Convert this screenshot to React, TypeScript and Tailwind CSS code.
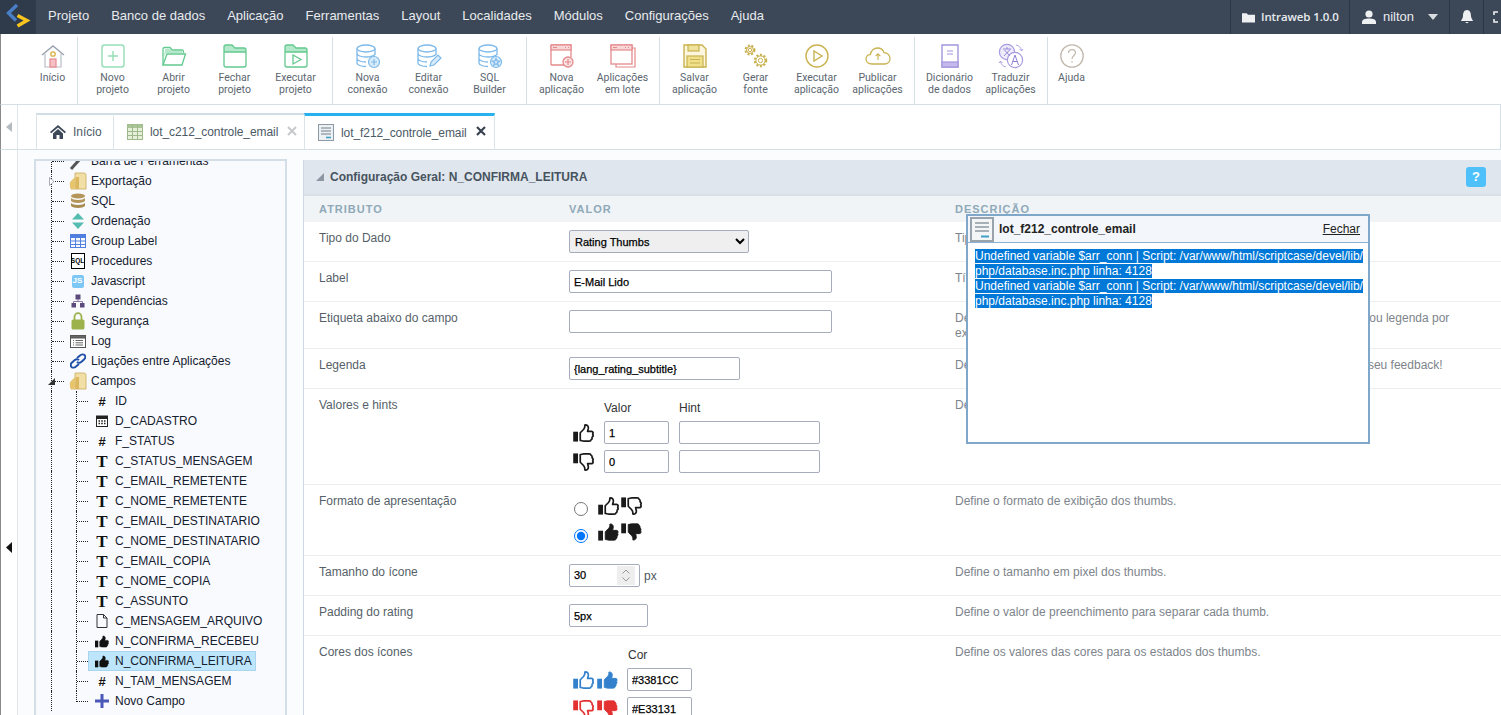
import React from "react";

const HAND = "M8.2 10.2 L12 6.4 C13.2 5 13.8 3.4 13.6 1.2 C16 0.6 18 2.6 17.6 5.2 L16.8 8.6 L21.4 8.6 C23.2 8.6 23.6 10.6 22.7 11.9 C23.5 13.3 23 14.8 22 15.4 C22.3 16.9 21.6 18.2 20.6 18.7 C20.6 19.8 19.6 20 18.6 20 L12.4 20 C10.6 20 9.8 19.2 8.2 19.2 Z";

function Thumb({ down, solid, color = "#1a1a1a" }: { down?: boolean; solid?: boolean; color?: string }) {
  return (
    <svg viewBox="0 0 24 21" width="21" height="18" className={down ? "-scale-y-100 shrink-0" : "shrink-0"}>
      <rect x="0" y="9" width="5.6" height="11.5" fill={color} />
      <path d={HAND} fill={solid ? color : "none"} stroke={color} strokeWidth={solid ? 1 : 2} strokeLinejoin="round" />
    </svg>
  );
}

const S = ({ children }: { children: React.ReactNode }) => (
  <svg viewBox="0 0 26 26" width="26" height="26" fill="none" strokeWidth="1.2">{children}</svg>
);

const G = "#62c98f";
const GL = "#b4e8cb";
const B = "#7db9ea";
const R = "#e48a8c";
const Y = "#c9b24f";

const IHome = () => (
  <S>
    <path d="M2 12 L13 3 L24 12" stroke="#9aa3ad" strokeWidth="1.4" />
    <path d="M5 10.5 V24 H21 V10.5" stroke="#b8bec6" />
    <circle cx="13" cy="11" r="2.2" stroke="#d6b13c" strokeWidth="1.3" />
    <rect x="10" y="16" width="6" height="8" fill="#f6c2c6" stroke="#e58a92" />
  </S>
);
const INew = () => (
  <S>
    <rect x="2" y="2" width="22" height="22" rx="2.5" stroke="#96dfb6" strokeWidth="1.4" />
    <path d="M13 8 V18 M8 13 H18" stroke="#96dfb6" strokeWidth="1.4" />
  </S>
);
const IOpen = () => (
  <S>
    <path d="M2 22 V6 C2 5 3 4.5 3.5 4.5 H9 L11 7 H21 C22 7 22.5 8 22.5 9 V10" stroke={G} strokeWidth="1.3" />
    <path d="M2 22 L6 11 H24.5 L21 22 Z" stroke={G} strokeWidth="1.3" />
    <path d="M4 6 H9 L10.5 8 H21 V10 H5 L3 14 Z" fill={GL} />
  </S>
);
const IClosed = ({ play }: { play?: boolean }) => (
  <S>
    <path d="M2 8 V4 C2 2.8 2.8 2 4 2 H10 L13 5 H22 C23.2 5 24 5.8 24 7 V9 H2 Z" fill={GL} />
    <path d="M2 9 V4 C2 2.8 2.8 2 4 2 H10 L13 5 H22 C23.2 5 24 5.8 24 7 V22 C24 23.2 23.2 24 22 24 H4 C2.8 24 2 23.2 2 22 Z M2 9 H24" stroke={G} strokeWidth="1.3" />
    {play && <path d="M10 12 L18 16.5 L10 21 Z" stroke={G} strokeWidth="1.3" />}
  </S>
);
const IDb = ({ badge }: { badge: "plus" | "pen" | "star" }) => (
  <S>
    <ellipse cx="11" cy="5.5" rx="9" ry="3.5" stroke={B} strokeWidth="1.3" />
    <path d="M2 5.5 V20 C2 22 6 23.5 11 23.5 M20 5.5 V12 M2 10.5 C2 12.5 6 14 11 14 C15 14 18 13.2 20 11.5 M2 15.5 C2 17.5 6 19 11 19" stroke={B} strokeWidth="1.3" />
    {badge === "plus" && (
      <>
        <circle cx="19" cy="19" r="5.5" fill="#d9ecfb" stroke={B} />
        <path d="M19 16 V22 M16 19 H22" stroke={B} />
      </>
    )}
    {badge === "pen" && <path d="M14 23 L15 19 L22 12 L25 15 L18 22 Z" fill="#d9ecfb" stroke={B} />}
    {badge === "star" && (
      <>
        <circle cx="19" cy="19" r="5.5" fill="#d9ecfb" stroke={B} />
        <path d="M19 15.5 L20 18 L22.5 18 L20.5 19.7 L21.2 22.2 L19 20.8 L16.8 22.2 L17.5 19.7 L15.5 18 L18 18 Z" stroke={B} />
      </>
    )}
  </S>
);
const IApp = () => (
  <S>
    <path d="M2 2 H22 V14 M15 22 H2 Z M2 2 V22" stroke={R} strokeWidth="1.3" />
    <rect x="2" y="2" width="20" height="5" fill="#f7d6d7" stroke={R} />
    <path d="M4 4.5 H8 M16 4.5 H17 M19 4.5 H20" stroke={R} />
    <circle cx="19" cy="19" r="5" fill="#fbe3e3" stroke={R} strokeWidth="1.3" />
    <path d="M19 16 V22 M16 19 H22" stroke={R} strokeWidth="1.2" />
  </S>
);
const IApps = () => (
  <S>
    <path d="M22 5 H25 V24 H6 V21" stroke={R} />
    <rect x="1" y="2" width="21" height="19" fill="#fff" stroke={R} strokeWidth="1.3" />
    <rect x="1" y="2" width="21" height="5" fill="#f7d6d7" stroke={R} />
    <path d="M3 4.5 H7 M15 4.5 H16 M18 4.5 H19" stroke={R} />
  </S>
);
const ISave = () => (
  <S>
    <path d="M2 2 H20 L24 6 V24 H2 Z" stroke={Y} strokeWidth="1.4" fill="#fbf6dd" />
    <rect x="6" y="2" width="11" height="6" fill="#efe29c" stroke={Y} />
    <rect x="5" y="13" width="16" height="11" fill="#f0e08c" stroke={Y} />
    <path d="M8 16.5 H18 M8 20 H18" stroke={Y} />
  </S>
);
const Gear = ({ cx, cy, r }: { cx: number; cy: number; r: number }) => (
  <>
    <circle cx={cx} cy={cy} r={r} stroke={Y} strokeWidth="2.2" strokeDasharray="2 1.6" />
    <circle cx={cx} cy={cy} r={r - 1} stroke={Y} strokeWidth="1" />
    <circle cx={cx} cy={cy} r={r / 2.6} stroke={Y} strokeWidth="1" />
  </>
);
const IGears = () => (
  <S>
    <Gear cx={7} cy={7} r={4.4} />
    <Gear cx={17.5} cy={17.5} r={5.6} />
  </S>
);
const IRun = () => (
  <S>
    <circle cx="13" cy="13" r="11" stroke={Y} strokeWidth="1.4" />
    <path d="M10 8 L18 13 L10 18 Z" stroke={Y} strokeWidth="1.4" />
  </S>
);
const ICloud = () => (
  <S>
    <path d="M7 21 C3 21 1 18.6 1 16 C1 13.4 3 11.6 5.4 11.6 C6 7.6 9 5 12.6 5 C15.6 5 18 6.8 19 9.6 C22.6 9.6 25 12.4 25 15.6 C25 18.8 22.6 21 19.6 21 Z" stroke={Y} strokeWidth="1.3" />
    <path d="M13 17 V11 M10.6 13.2 L13 10.8 L15.4 13.2" stroke={Y} strokeWidth="1.1" />
  </S>
);
const IBook = () => (
  <S>
    <path d="M5 2 H21 V24 H5 Z" stroke="#a496de" strokeWidth="1.4" />
    <rect x="5" y="19" width="16" height="5" fill="#c3b9ec" stroke="#a496de" />
    <path d="M10 8 H16 M10 11 H16" stroke="#a496de" strokeWidth="1.2" />
  </S>
);
const ITranslate = () => (
  <S>
    <circle cx="9" cy="9" r="7.6" fill="#eeebfa" stroke="#a99be0" />
    <circle cx="17" cy="17" r="7.6" fill="#fff" stroke="#a99be0" />
    <path d="M5 6 H13 M9 4 V6 M6 13 L12 6.5 M6.5 7 L12 13" stroke="#8f80d4" strokeWidth="0.9" />
    <path d="M13.5 22 L17 12 L20.5 22 M15 18.5 H19" stroke="#8f80d4" strokeWidth="1" />
    <path d="M18 2 C21 2.5 23 4.5 23.5 7.5 M21.5 6 L23.5 8 L25 6 M8 24 C5 23.5 3 21.5 2.5 18.5 M1 20 L2.5 18 L4.5 20" stroke="#a99be0" strokeWidth="0.9" />
  </S>
);
const IHelp = () => (
  <S>
    <circle cx="13" cy="13" r="11.2" stroke="#c3b8ac" strokeWidth="1.3" />
    <path d="M9.5 10 C9.5 7.8 11 6.6 13 6.6 C15 6.6 16.5 7.8 16.5 9.8 C16.5 12.4 13 12.8 13 16" stroke="#c3b8ac" strokeWidth="1.2" />
    <path d="M13 18 V19.6" stroke="#c3b8ac" strokeWidth="1.2" />
  </S>
);

function TB({ icon, l1, l2, w = "w-[61px]" }: { icon: React.ReactNode; l1: string; l2?: string; w?: string }) {
  return (
    <div className={`${w} flex flex-col items-center`}>
      <div className="h-[26px] mt-[6px] mb-[3px] flex items-center">{icon}</div>
      <div className="[font-family:'Roboto',sans-serif] text-[10.5px] leading-[12px] text-center text-[#5b6670] whitespace-nowrap">
        {l1}
        {l2 && <br />}
        {l2}
      </div>
    </div>
  );
}

function Group({ children }: { children: React.ReactNode }) {
  return <div className="flex h-full pl-[4px] pr-[6px] border-r border-[#d5e0e6]">{children}</div>;
}

/* ---------- tree ---------- */
const IFolder = () => (
  <svg viewBox="0 0 18 18" width="18" height="18">
    <path d="M6 1 H15 C16.4 1 17 2 17 3 V17 H2 L6 14 Z" fill="#f2dfa6" stroke="#c9a95c" strokeWidth="0.8" />
    <path d="M1 10 L6 5 V14 L5 17 H2 C1 17 0.6 14 1 10 Z" fill="#e7c56f" />
    <path d="M7 5 H10 V17 H6 Z" fill="#dcb760" />
  </svg>
);
const tIcons: Record<string, React.ReactNode> = {
  wrench: (
    <svg viewBox="0 0 18 18" width="18" height="18">
      <path d="M2 17 L11 7" stroke="#555" strokeWidth="3" />
      <path d="M10 5 L14 1 L17 3 L13 8 Z" fill="#777" />
    </svg>
  ),
  folder: <IFolder />,
  db: (
    <svg viewBox="0 0 16 16" width="16" height="16">
      <ellipse cx="8" cy="3" rx="7" ry="2.6" fill="#b5965a" />
      <path d="M1 5 C3 7.6 13 7.6 15 5 V8 C13 10.6 3 10.6 1 8 Z" fill="#b5965a" />
      <path d="M1 10 C3 12.6 13 12.6 15 10 V13 C13 15.6 3 15.6 1 13 Z" fill="#a98c52" />
    </svg>
  ),
  sort: (
    <svg viewBox="0 0 14 16" width="14" height="16">
      <path d="M7 0 L13 6.5 H1 Z M7 16 L13 9.5 H1 Z" fill="#55bdb0" />
    </svg>
  ),
  grid: (
    <svg viewBox="0 0 16 14" width="16" height="14" fill="none" stroke="#4f80e0">
      <rect x="0.5" y="0.5" width="15" height="13" />
      <rect x="0.5" y="0.5" width="15" height="3" fill="#4f80e0" />
      <path d="M5.5 0.5 V13.5 M10.5 0.5 V13.5 M0.5 7 H15.5 M0.5 10.5 H15.5" />
    </svg>
  ),
  sql: (
    <span className="w-[14px] h-[16px] border border-black bg-white flex items-center justify-center text-[6.5px] font-bold leading-none text-black">
      SQL
    </span>
  ),
  js: (
    <span className="w-[12px] h-[13px] rounded-[2px] bg-[#7cc7f5] flex items-center justify-center text-[8px] font-bold leading-none text-white">
      JS
    </span>
  ),
  tree: (
    <svg viewBox="0 0 14 14" width="14" height="14">
      <rect x="4.5" y="0.5" width="5" height="5" fill="#5d4a7d" />
      <rect x="0.5" y="9" width="4.5" height="4.5" fill="#5d4a7d" />
      <rect x="9" y="9" width="4.5" height="4.5" fill="#5d4a7d" />
      <path d="M7 5 V7.5 H2.5 V9 M7 7.5 H11.5 V9" stroke="#8a7aa4" fill="none" />
    </svg>
  ),
  lock: (
    <svg viewBox="0 0 14 18" width="14" height="18">
      <path d="M3.5 8 V5 C3.5 3 5 1.2 7 1.2 C9 1.2 10.5 3 10.5 5 V8" stroke="#9cb24c" strokeWidth="1.8" fill="none" />
      <rect x="0.5" y="7.5" width="13" height="10" rx="1.5" fill="#9cb24c" />
    </svg>
  ),
  log: (
    <svg viewBox="0 0 16 13" width="16" height="13" fill="none" stroke="#555">
      <rect x="0.5" y="0.5" width="15" height="12" fill="#fff" />
      <rect x="0.5" y="0.5" width="15" height="2.5" fill="#666" />
      <path d="M3 5.5 H4 M5.5 5.5 H13 M3 7.8 H4 M5.5 7.8 H13 M3 10 H4 M5.5 10 H13" strokeWidth="0.9" />
    </svg>
  ),
  link: (
    <svg viewBox="0 0 16 16" width="16" height="16" fill="none" stroke="#1f4fa8" strokeWidth="1.9">
      <path d="M7 5 L10 2.5 C11.5 1 13.5 1 14.6 2.2 C15.6 3.4 15.4 5.2 14 6.5 L11.2 9 C9.8 10.2 8 10 7 8.8" />
      <path d="M9 11 L6 13.5 C4.5 15 2.5 15 1.4 13.8 C0.4 12.6 0.6 10.8 2 9.5 L4.8 7 C6.2 5.8 8 6 9 7.2" />
    </svg>
  ),
  hash: <span className="text-[13px] font-bold leading-none text-[#111]">#</span>,
  cal: (
    <svg viewBox="0 0 12 12" width="12" height="12">
      <rect x="0.5" y="1" width="11" height="10.5" fill="#fff" stroke="#222" />
      <rect x="0.5" y="1" width="11" height="3" fill="#222" />
      <path d="M2.5 6 H4 M5.2 6 H6.8 M8 6 H9.5 M2.5 8.5 H4 M5.2 8.5 H6.8 M8 8.5 H9.5" stroke="#222" strokeWidth="1.3" />
    </svg>
  ),
  T: <span className="[font-family:'Liberation_Serif',serif] text-[17px] font-bold leading-none text-[#111]">T</span>,
  file: (
    <svg viewBox="0 0 12 14" width="12" height="14" fill="none" stroke="#333">
      <path d="M1 0.5 H7.5 L11 4 V13.5 H1 Z M7.5 0.5 V4 H11" />
    </svg>
  ),
  thumb: (
    <svg viewBox="0 0 24 21" width="14" height="13">
      <rect x="0" y="9" width="5.6" height="11.5" fill="#111" />
      <path d={HAND} fill="#111" stroke="#111" />
    </svg>
  ),
  plus: (
    <svg viewBox="0 0 14 14" width="14" height="14">
      <path d="M5.5 0 H8.5 V5.5 H14 V8.5 H8.5 V14 H5.5 V8.5 H0 V5.5 H5.5 Z" fill="#4a58b8" />
    </svg>
  ),
};

function Guide({ w, end }: { w: string; end?: boolean }) {
  return (
    <div className={`${w} ${end ? "h-[11px] self-start" : "h-full"} shrink-0 border-l border-dotted border-[#222]`}>
      <div className="mt-[10px] border-t border-dotted border-[#222]" />
    </div>
  );
}

const L1 = ({ icon, text, mark }: { icon: string; text: string; mark?: "open" | "closed" }) => (
  <div className="h-5 flex items-center ml-[15px]">
    <div className="relative h-full flex">
      <Guide w="w-[13px]" />
      {mark === "closed" && (
        <svg viewBox="0 0 6 9" width="6" height="9" className="absolute left-[-2px] top-[6px]">
          <path d="M0.5 0.5 L5 4.5 L0.5 8.5 Z" fill="#fff" stroke="#aab" />
        </svg>
      )}
      {mark === "open" && (
        <svg viewBox="0 0 7 7" width="7" height="7" className="absolute left-[-3px] top-[7px]">
          <path d="M7 0 V7 H0 Z" fill="#333" />
        </svg>
      )}
    </div>
    <div className="w-[27px] flex justify-center shrink-0">{tIcons[icon]}</div>
    <span className="text-[12px] text-[#14202e] whitespace-nowrap">{text}</span>
  </div>
);

const L2 = ({ icon, text, selected, end }: { icon: string; text: string; selected?: boolean; end?: boolean }) => (
  <div className="h-5 flex items-center ml-[15px]">
    <div className="w-[25px] h-full shrink-0 border-l border-dotted border-[#222]" />
    <Guide w="w-[12px]" end={end} />
    <div className={`w-[168px] h-5 flex items-center border ${selected ? "bg-[#bde6fc] border-[#a9d6ee]" : "border-transparent"}`}>
      <div className="w-[26px] flex justify-center shrink-0">{tIcons[icon]}</div>
      <span className="text-[12px] text-[#14202e] whitespace-nowrap">{text}</span>
    </div>
  </div>
);

/* ---------- form ---------- */
const thick = "[-webkit-text-stroke:0.25px_#000]";
const fieldCls = `h-[23px] border border-[#a6acbb] rounded-[2px] bg-white px-[4px] text-[11px] text-black outline-none ${thick}`;

function Row({ h, label, desc, children }: { h: string; label: string; desc?: React.ReactNode; children?: React.ReactNode }) {
  return (
    <div className={`${h} shrink-0 flex border-b border-[#ebeff2]`}>
      <div className="w-[265px] shrink-0 pl-[15px] pt-[9px] leading-[15px] text-[#565f69]">{label}</div>
      <div className="w-[386px] shrink-0 pt-2">{children}</div>
      <div className="flex-1 pt-[9px] pr-[50px] leading-[15px] text-[#7d848b]">{desc}</div>
    </div>
  );
}

export default function App() {
  const menu = ["Projeto", "Banco de dados", "Aplicação", "Ferramentas", "Layout", "Localidades", "Módulos", "Configurações", "Ajuda"];
  return (
    <div className="h-[715px] w-full overflow-hidden flex flex-col relative bg-white text-[12px] [font-family:'Liberation_Sans',Arial,sans-serif]">
      {/* top bar */}
      <div className="h-[34px] shrink-0 flex bg-[#3c4858] text-[#e8ebee]">
        <div className="w-[36px] bg-[#2f3a4b] shrink-0">
          <svg viewBox="0 0 36 34" width="36" height="34" fill="none" strokeWidth="3.4">
            <path d="M17 5 L8.5 13 L16 20.5" stroke="#4a7fc8" />
            <path d="M17.5 15.5 L27 20.5 L17.5 26" stroke="#f7c51e" />
          </svg>
        </div>
        <div className="flex items-center pl-[12px] gap-[22px] text-[13px] flex-1 pb-[2px]">
          {menu.map((m) => (
            <span key={m}>{m}</span>
          ))}
        </div>
        <div className="flex h-full">
          <div className="w-[119px] border-l border-[#2b3544] flex items-center pl-[11px] gap-[6px]">
            <svg viewBox="0 0 14 11" width="13" height="11">
              <path d="M0 1 H5 L6.5 2.5 H14 V11 H0 Z" fill="#eef0f2" />
            </svg>
            <span className="[font-family:'Open_Sans',sans-serif] text-[11.5px] font-semibold tracking-[-0.1px]">Intraweb 1.0.0</span>
          </div>
          <div className="w-[100px] border-l border-[#2b3544] flex items-center pl-[12px]">
            <svg viewBox="0 0 14 14" width="14" height="14">
              <circle cx="7" cy="4" r="3.6" fill="#eef0f2" />
              <path d="M0 14 V12 C0 9.5 3 8.5 7 8.5 C11 8.5 14 9.5 14 12 V14 Z" fill="#eef0f2" />
            </svg>
            <span className="ml-[7px] text-[13px]">nilton</span>
            <svg viewBox="0 0 10 6" width="10" height="6" className="ml-[14px]">
              <path d="M0 0 H10 L5 6 Z" fill="#d9dde1" />
            </svg>
          </div>
          <div className="w-[34px] border-l border-[#2b3544] flex items-center justify-center">
            <svg viewBox="0 0 12 14" width="12" height="14">
              <path d="M6 0 C9 0 10 3 10 6 C10 8.5 12 10 12 11 H0 C0 10 2 8.5 2 6 C2 3 3 0 6 0 Z M4.5 12 H7.5 C7.5 13.5 4.5 13.5 4.5 12 Z" fill="#eef0f2" />
            </svg>
          </div>
          <div className="w-[18px] border-l border-[#2b3544] flex items-center pl-[9px]">
            <svg viewBox="0 0 5 12" width="5" height="12" fill="none" stroke="#eef0f2" strokeWidth="1.6">
              <path d="M5 1 H1 V4 M1 8 V11 H5" />
            </svg>
          </div>
        </div>
      </div>

      {/* toolbar */}
      <div className="h-[71px] shrink-0 border-b border-[#d5e0e6] border-l border-l-[#8a8a8a] pt-[3px] flex">
        <div className="flex h-full w-[77px] pl-[27px] border-r border-[#d5e0e6]">
          <TB w="w-[50px]" icon={<IHome />} l1="Início" />
        </div>
        <Group>
          <TB icon={<INew />} l1="Novo" l2="projeto" />
          <TB icon={<IOpen />} l1="Abrir" l2="projeto" />
          <TB icon={<IClosed />} l1="Fechar" l2="projeto" />
          <TB icon={<IClosed play />} l1="Executar" l2="projeto" />
        </Group>
        <Group>
          <TB icon={<IDb badge="plus" />} l1="Nova" l2="conexão" />
          <TB icon={<IDb badge="pen" />} l1="Editar" l2="conexão" />
          <TB icon={<IDb badge="star" />} l1="SQL" l2="Builder" />
        </Group>
        <Group>
          <TB icon={<IApp />} l1="Nova" l2="aplicação" />
          <TB icon={<IApps />} l1="Aplicações" l2="em lote" />
        </Group>
        <Group>
          <TB icon={<ISave />} l1="Salvar" l2="aplicação" />
          <TB icon={<IGears />} l1="Gerar" l2="fonte" />
          <TB icon={<IRun />} l1="Executar" l2="aplicação" />
          <TB icon={<ICloud />} l1="Publicar" l2="aplicações" />
        </Group>
        <Group>
          <TB icon={<IBook />} l1="Dicionário" l2="de dados" />
          <TB icon={<ITranslate />} l1="Traduzir" l2="aplicações" />
        </Group>
        <TB w="w-[47px]" icon={<IHelp />} l1="Ajuda" />
      </div>

      {/* tabs */}
      <div className="h-[45px] shrink-0 flex border-b border-[#d5e0e6] border-r border-r-[#d5e0e6] border-l border-l-[#8a8a8a]">
        <div className="w-[17px] shrink-0 border-r border-[#dfe6ea] flex items-center justify-center">
          <svg viewBox="0 0 6 10" width="6" height="10">
            <path d="M6 0 V10 L0 5 Z" fill="#b4bcc2" />
          </svg>
        </div>
        <div className="flex pl-[18px] pt-[8px] text-[#4c5a66]">
          <div className="w-[77px] border-t-2 border-t-[#d0dde3] border-l border-l-[#dbe4e8] flex items-center pl-[13px] gap-[7px]">
            <svg viewBox="0 0 16 14" width="16" height="14">
              <path d="M8 0 L16 7 L14.8 8.2 L8 2.4 L1.2 8.2 L0 7 Z M3 8.4 L8 4 L13 8.4 V14 H9.5 V10 H6.5 V14 H3 Z" fill="#3c4858" />
            </svg>
            <span>Início</span>
          </div>
          <div className="w-[191px] border-t-2 border-t-[#d0dde3] border-l border-l-[#dbe4e8] flex items-center pl-[13px]">
            <svg viewBox="0 0 16 16" width="16" height="16" fill="none">
              <rect x="0.5" y="0.5" width="15" height="15" fill="#e6f0d8" stroke="#9db88a" />
              <rect x="0.5" y="0.5" width="15" height="3.5" fill="#a9c596" />
              <path d="M5.5 0.5 V15.5 M10.5 0.5 V15.5 M0.5 7.5 H15.5 M0.5 11.5 H15.5" stroke="#9db88a" />
            </svg>
            <span className="ml-[7px] tracking-[-0.08px]">lot_c212_controle_email</span>
            <svg viewBox="0 0 10 10" width="10" height="10" className="ml-[9px] mb-[3px]">
              <path d="M1 1 L9 9 M9 1 L1 9" stroke="#c6cacd" strokeWidth="2" />
            </svg>
          </div>
          <div className="w-[191px] border-t-[3px] border-t-[#27b2ee] border-l border-l-[#dbe4e8] border-r border-r-[#dbe4e8] flex items-center pl-[13px]">
            <svg viewBox="0 0 16 17" width="16" height="17" fill="none">
              <rect x="0.5" y="0.5" width="15" height="16" fill="#eef1f3" stroke="#8c98a3" />
              <path d="M3 4 H13 M3 7 H13 M3 10 H13" stroke="#9aa5ae" strokeWidth="1.4" />
              <path d="M8 13.5 H13" stroke="#3f9fc4" strokeWidth="1.6" />
            </svg>
            <span className="ml-[7px] tracking-[-0.08px]">lot_f212_controle_email</span>
            <svg viewBox="0 0 10 10" width="10" height="10" className="ml-[9px] mb-[3px]">
              <path d="M1 1 L9 9 M9 1 L1 9" stroke="#38424f" strokeWidth="2.2" />
            </svg>
          </div>
        </div>
      </div>

      {/* body */}
      <div className="flex-1 min-h-0 flex bg-[#fbfcfe]">
        <div className="w-[18px] shrink-0 border-l border-l-[#8a8a8a] border-r border-r-[#dfe6ea] flex items-center justify-center bg-white">
          <svg viewBox="0 0 6 11" width="6" height="11" className="mt-[230px]">
            <path d="M6 0 V11 L0 5.5 Z" fill="#111" />
          </svg>
        </div>

        {/* tree */}
        <div className="w-[285px] shrink-0 pl-[16px] pr-[16px] pt-[9px]">
          <div className="w-[253px] h-[700px] border-2 border-[#d3dee6] bg-[#f9fafe] overflow-hidden">
            <div className="-mt-[10px]">
              <L1 icon="wrench" text="Barra de Ferramentas" />
              <L1 icon="folder" text="Exportação" mark="closed" />
              <L1 icon="db" text="SQL" />
              <L1 icon="sort" text="Ordenação" />
              <L1 icon="grid" text="Group Label" />
              <L1 icon="sql" text="Procedures" />
              <L1 icon="js" text="Javascript" />
              <L1 icon="tree" text="Dependências" />
              <L1 icon="lock" text="Segurança" />
              <L1 icon="log" text="Log" />
              <L1 icon="link" text="Ligações entre Aplicações" />
              <L1 icon="folder" text="Campos" mark="open" />
              <L2 icon="hash" text="ID" />
              <L2 icon="cal" text="D_CADASTRO" />
              <L2 icon="hash" text="F_STATUS" />
              <L2 icon="T" text="C_STATUS_MENSAGEM" />
              <L2 icon="T" text="C_EMAIL_REMETENTE" />
              <L2 icon="T" text="C_NOME_REMETENTE" />
              <L2 icon="T" text="C_EMAIL_DESTINATARIO" />
              <L2 icon="T" text="C_NOME_DESTINATARIO" />
              <L2 icon="T" text="C_EMAIL_COPIA" />
              <L2 icon="T" text="C_NOME_COPIA" />
              <L2 icon="T" text="C_ASSUNTO" />
              <L2 icon="file" text="C_MENSAGEM_ARQUIVO" />
              <L2 icon="thumb" text="N_CONFIRMA_RECEBEU" />
              <L2 icon="thumb" text="N_CONFIRMA_LEITURA" selected />
              <L2 icon="hash" text="N_TAM_MENSAGEM" />
              <L2 icon="plus" text="Novo Campo" end />
            </div>
          </div>
        </div>

        {/* main */}
        <div className="flex-1 min-w-0 pt-[10px] flex flex-col">
          <div className="flex-1 min-h-0 border-l border-[#cfd8e6] bg-white flex flex-col overflow-hidden">
            <div className="h-[36px] shrink-0 bg-[#e0e6ed] border-b-2 border-[#d6e0e5] flex items-center pl-[12px] pr-[15px]">
              <svg viewBox="0 0 8 8" width="8" height="8">
                <path d="M8 0 V8 H0 Z" fill="#8d97a3" />
              </svg>
              <span className="ml-[6px] font-bold text-[#47535f]">Configuração Geral: N_CONFIRMA_LEITURA</span>
              <div className="ml-auto w-5 h-5 rounded-[3px] bg-[#4fc1fa] flex items-center justify-center text-white font-bold text-[13px]">?</div>
            </div>
            <div className="h-[26px] shrink-0 flex items-center bg-[#f0f4f7] text-[11px] font-bold tracking-[1px] text-[#8fa9b8]">
              <div className="w-[265px] pl-[15px]">ATRIBUTO</div>
              <div className="w-[386px]">VALOR</div>
              <div>DESCRIÇÃO</div>
            </div>

            <Row h="h-[40px]" label="Tipo do Dado" desc="Tipo de dado do campo selecionado.">
              <select defaultValue="Rating Thumbs" className={`w-[180px] h-[23px] border border-[#a6acbb] rounded-[2px] bg-[#efefef] pl-[1px] text-[11px] text-black outline-none ${thick}`}>
                <option>Rating Thumbs</option>
              </select>
            </Row>
            <Row h="h-[40px]" label="Label" desc="Título do campo na aplicação.">
              <input readOnly defaultValue="E-Mail Lido" className={`${fieldCls} w-[263px]`} />
            </Row>
            <Row
              h="h-[47px]"
              label="Etiqueta abaixo do campo"
              desc="Define o texto a ser exibido abaixo do campo, podendo ser usado como dica, ou legenda por exemplo."
            >
              <input readOnly className={`${fieldCls} w-[263px]`} />
            </Row>
            <Row h="h-[40px]" label="Legenda" desc={"Define a legenda do thumb, que será exibida para o usuário. Ex.:\u00a0 Deixe aqui seu feedback!"}>
              <input readOnly defaultValue="{lang_rating_subtitle}" className={`${fieldCls} w-[171px]`} />
            </Row>
            <Row h="h-[96px]" label="Valores e hints" desc="Define os valores e hints dos thumbs.">
              <div className="pl-[35px] h-[15px] mt-[4px] flex text-[#333] leading-[15px]">
                <span className="w-[75px]">Valor</span>
                <span>Hint</span>
              </div>
              <div className="mt-[5px] flex items-center pl-[4px] gap-[10px]">
                <Thumb />
                <input readOnly defaultValue="1" className={`${fieldCls} w-[65px]`} />
                <input readOnly className={`${fieldCls} w-[141px]`} />
              </div>
              <div className="mt-[6px] flex items-center pl-[4px] gap-[10px]">
                <Thumb down />
                <input readOnly defaultValue="0" className={`${fieldCls} w-[65px]`} />
                <input readOnly className={`${fieldCls} w-[141px]`} />
              </div>
            </Row>
            <Row h="h-[71px]" label="Formato de apresentação" desc="Define o formato de exibição dos thumbs.">
              <div className="flex items-center pl-[5px] h-[20px] mt-[4px]">
                <input type="radio" name="fmt" readOnly className="w-[14px] h-[14px] m-0 mt-[4px]" />
                <span className="ml-[10px] flex gap-[2px] -mt-[3px]">
                  <Thumb />
                  <Thumb down />
                </span>
              </div>
              <div className="flex items-center pl-[5px] h-[20px] mt-[6px]">
                <input type="radio" name="fmt" checked readOnly className="w-[14px] h-[14px] m-0 mt-[6px]" />
                <span className="ml-[10px] flex gap-[2px] -mt-[3px]">
                  <Thumb solid />
                  <Thumb solid down />
                </span>
              </div>
            </Row>
            <Row h="h-[40px]" label="Tamanho do ícone" desc="Define o tamanho em pixel dos thumbs.">
              <div className="flex items-center">
                <div className={`w-[71px] h-[23px] border border-[#a6acbb] rounded-[2px] bg-white flex items-center pl-[4px] pr-[4px] text-[11px] text-black ${thick}`}>
                  <span className="flex-1">30</span>
                  <span className="w-[18px] h-[19px] bg-[#eeeeee] flex flex-col items-center justify-center gap-[3px]">
                    <svg viewBox="0 0 8 5" width="8" height="5" fill="none" stroke="#9a9a9a"><path d="M0.5 4.5 L4 1 L7.5 4.5" /></svg>
                    <svg viewBox="0 0 8 5" width="8" height="5" fill="none" stroke="#9a9a9a"><path d="M0.5 0.5 L4 4 L7.5 0.5" /></svg>
                  </span>
                </div>
                <span className="ml-[4px] text-[#4d5660]">px</span>
              </div>
            </Row>
            <Row h="h-[40px]" label="Padding do rating" desc="Define o valor de preenchimento para separar cada thumb.">
              <input readOnly defaultValue="5px" className={`${fieldCls} w-[79px]`} />
            </Row>
            <Row h="h-[100px]" label="Cores dos ícones" desc="Define os valores das cores para os estados dos thumbs.">
              <div className="pl-[59px] h-[15px] mt-[4px] text-[#333] leading-[15px]">Cor</div>
              <div className="mt-[5px] flex items-center pl-[4px]">
                <span className="flex gap-[3px] w-[54px]">
                  <Thumb color="#3381cc" />
                  <Thumb solid color="#3381cc" />
                </span>
                <input readOnly defaultValue="#3381CC" className={`${fieldCls} w-[65px]`} />
              </div>
              <div className="mt-[6px] flex items-center pl-[4px]">
                <span className="flex gap-[3px] w-[54px]">
                  <Thumb down color="#e33131" />
                  <Thumb down solid color="#e33131" />
                </span>
                <input readOnly defaultValue="#E33131" className={`${fieldCls} w-[65px]`} />
              </div>
            </Row>
          </div>
        </div>
      </div>

      {/* popup */}
      <div className="absolute left-[966px] top-[214px] w-[404px] h-[230px] border-2 border-[#7fa7c9] bg-white flex flex-col">
        <div className="h-[27px] shrink-0 bg-[#f3f6fa] border-b border-[#8fb1cf] flex items-center pl-[2px] pr-[8px]">
          <svg viewBox="0 0 24 25" width="24" height="25" fill="none" className="shrink-0">
            <rect x="1" y="1" width="22" height="23" fill="#f3f5f6" stroke="#99a3ad" strokeWidth="2" />
            <path d="M5 6 H19 M5 10 H19 M5 14 H19" stroke="#8e98a2" strokeWidth="1.6" />
            <path d="M11 19.5 H19" stroke="#3f9fc4" strokeWidth="2" />
          </svg>
          <span className="ml-[5px] font-bold text-[#222]">lot_f212_controle_email</span>
          <span className="ml-auto underline text-[#222]">Fechar</span>
        </div>
        <div className="pl-[7px] pt-[6px] leading-[15px] text-white whitespace-nowrap">
          <span className="bg-[#0078d7]">Undefined variable $arr_conn | Script: /var/www/html/scriptcase/devel/lib/</span>
          <br />
          <span className="bg-[#0078d7]">php/database.inc.php linha: 4128</span>
          <br />
          <span className="bg-[#0078d7]">Undefined variable $arr_conn | Script: /var/www/html/scriptcase/devel/lib/</span>
          <br />
          <span className="bg-[#0078d7]">php/database.inc.php linha: 4128</span>
        </div>
      </div>
    </div>
  );
}
